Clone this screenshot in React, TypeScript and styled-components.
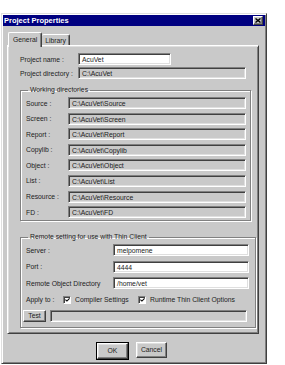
import React from 'react'
import styled, { createGlobalStyle } from 'styled-components'

const FACE = '#c9c9c9'
const TEXT = '#222'
const FONT = `'Liberation Sans', Arial, sans-serif`

const GlobalStyle = createGlobalStyle`
  html, body { margin: 0; padding: 0; background: #fff; }
  body { font-family: ${FONT}; color: ${TEXT}; }
  * { box-sizing: border-box; }
`

const workingDirs = [
  ['Source :', 'C:\\AcuVet\\Source'],
  ['Screen :', 'C:\\AcuVet\\Screen'],
  ['Report :', 'C:\\AcuVet\\Report'],
  ['Copylib :', 'C:\\AcuVet\\Copylib'],
  ['Object :', 'C:\\AcuVet\\Object'],
  ['List :', 'C:\\AcuVet\\List'],
  ['Resource :', 'C:\\AcuVet\\Resource'],
  ['FD :', 'C:\\AcuVet\\FD']
]

const CheckMark = () => (
  <svg width='6' height='6' viewBox='0 0 6 6'>
    <path d='M0.5 2.5 L2.3 4.3 L5.5 1' stroke='#000' strokeWidth='1.3' fill='none' />
  </svg>
)

const App = () => {
  return (
    <>
      <GlobalStyle />
      <Window>
        <TitleBar>
          <Title>Project Properties</Title>
          <CloseButton>
            <svg width='6' height='5' viewBox='0 0 6 5'>
              <path d='M0.5 0.5 L5.5 4.5 M5.5 0.5 L0.5 4.5' stroke='#000' strokeWidth='1.4' />
            </svg>
          </CloseButton>
        </TitleBar>

        <Body>
          <TabRow>
            <Tab active>General</Tab>
            <Tab>Library</Tab>
          </TabRow>
          <Panel>
            <TopGrid>
              <Label>Project name :</Label>
              <Input white width={93}>AcuVet</Input>
              <Label>Project directory :</Label>
              <Input width={168}>C:\AcuVet</Input>
            </TopGrid>

            <Group width={231} marginTop={7}>
              <Legend>Working directories</Legend>
              <DirGrid>
                {workingDirs.map(([label, path]) => (
                  <React.Fragment key={label}>
                    <Label>{label}</Label>
                    <Input width={178}>{path}</Input>
                  </React.Fragment>
                ))}
              </DirGrid>
            </Group>

            <Group width={236} marginTop={12}>
              <Legend>Remote setting for use with Thin Client</Legend>
              <RemoteStack>
                <RemoteGrid>
                  <Label>Server :</Label>
                  <Input white width={136}>melpomene</Input>
                  <Label>Port :</Label>
                  <Input white width={136}>4444</Input>
                  <Label>Remote Object Directory</Label>
                  <Input white width={136}>/home/vet</Input>
                </RemoteGrid>
                <ApplyRow>
                  <ApplyLabel>Apply to :</ApplyLabel>
                  <CheckOption width={75}>
                    <CheckBox>
                      <CheckMark />
                    </CheckBox>
                    Compiler Settings
                  </CheckOption>
                  <CheckOption>
                    <CheckBox>
                      <CheckMark />
                    </CheckBox>
                    Runtime Thin Client Options
                  </CheckOption>
                </ApplyRow>
                <TestRow>
                  <SmallButton>Test</SmallButton>
                  <Input width={197} />
                </TestRow>
              </RemoteStack>
            </Group>
          </Panel>

          <ButtonRow>
            <DefaultFrame>
              <PushButton>OK</PushButton>
            </DefaultFrame>
            <PushButton>Cancel</PushButton>
          </ButtonRow>
        </Body>
      </Window>
    </>
  )
}

export default App

const Window = styled.div`
  width: 266px;
  height: 351px;
  margin: 13px 0 0 1px;
  background: ${FACE};
  border: 1px solid;
  border-color: #dfdfdf #404040 #404040 #dfdfdf;
  box-shadow: inset 1px 1px #fff, inset -1px -1px #808080;
  padding: 1px;
  display: flex;
  flex-direction: column;
`

const TitleBar = styled.div`
  height: 11px;
  background: #000080;
  display: flex;
  align-items: center;
  justify-content: space-between;
  padding: 0 2px 0 1px;
`

const Title = styled.div`
  color: #fff;
  font-weight: bold;
  font-size: 7.5px;
  line-height: 9px;
`

const CloseButton = styled.div`
  width: 10px;
  height: 9px;
  background: ${FACE};
  border: 1px solid;
  border-color: #fff #404040 #404040 #fff;
  box-shadow: inset -1px -1px #808080;
  display: flex;
  align-items: center;
  justify-content: center;
`

const Body = styled.div`
  flex: 1;
  display: flex;
  flex-direction: column;
  padding: 6px 0 0 4px;
`

const TabRow = styled.div`
  display: flex;
  align-items: flex-end;
  padding-left: 1px;
  margin-bottom: -2px;
  position: relative;
  z-index: 1;
`

const Tab = styled.div<{ active?: boolean }>`
  height: ${(p) => (p.active ? 15 : 11)}px;
  margin-bottom: ${(p) => (p.active ? 0 : 2)}px;
  padding: ${(p) => (p.active ? '2px 4px 0 4px' : '1px 3px 0 3px')};
  background: ${FACE};
  border-top: 1px solid #fff;
  border-left: ${(p) => (p.active ? '1px solid #fff' : 'none')};
  border-right: 1px solid #404040;
  box-shadow: inset -1px 0 #808080;
  border-radius: 2px 2px 0 0;
  font-size: 6.8px;
  line-height: 9px;
`

const Panel = styled.div`
  width: 252px;
  height: 289px;
  border: 1px solid;
  border-color: #fff #404040 #404040 #fff;
  box-shadow: inset 1px 1px #dfdfdf, inset -1px -1px #808080;
  padding: 7px 0 0 12px;
  display: flex;
  flex-direction: column;
  align-items: flex-start;
`

const Label = styled.div`
  font-size: 6.8px;
  line-height: 9px;
  white-space: nowrap;
`

const Input = styled.div<{ white?: boolean; width: number }>`
  width: ${(p) => p.width}px;
  height: 12px;
  background: ${(p) => (p.white ? '#fff' : FACE)};
  border: 1px solid;
  border-color: #808080 #fff #fff #808080;
  box-shadow: inset 1px 1px #404040, inset -1px -1px #dfdfdf;
  padding: 1px 0 0 3px;
  font-size: 6.8px;
  line-height: 9px;
  white-space: nowrap;
  overflow: hidden;
`

const TopGrid = styled.div`
  display: grid;
  grid-template-columns: 58px auto;
  row-gap: 2px;
  align-items: center;
`

const Group = styled.fieldset<{ width: number; marginTop: number }>`
  width: ${(p) => p.width}px;
  margin: ${(p) => p.marginTop}px 0 0 0;
  padding: 3px 4px 2px 5px;
  min-width: 0;
  border: 1px solid #808080;
  box-shadow: 1px 1px 0 #fff, inset 1px 1px 0 #fff;
`

const Legend = styled.legend`
  margin-left: 2px;
  padding: 0 2px;
  font-size: 6.8px;
  line-height: 8px;
`

const DirGrid = styled.div`
  display: grid;
  grid-template-columns: 42px auto;
  grid-auto-rows: 12px;
  row-gap: 3.6px;
  align-items: center;
`

const RemoteStack = styled.div`
  display: flex;
  flex-direction: column;
  gap: 4.5px;
  margin-left: -3px;
  padding-bottom: 3px;
`

const RemoteGrid = styled.div`
  display: grid;
  grid-template-columns: 87px auto;
  grid-auto-rows: 12px;
  row-gap: 4.5px;
  align-items: center;
  padding-left: 3px;
`

const ApplyRow = styled.div`
  height: 12px;
  display: flex;
  align-items: center;
  padding-left: 3px;
  font-size: 6.8px;
`

const ApplyLabel = styled.div`
  width: 37px;
  white-space: nowrap;
`

const CheckOption = styled.div<{ width?: number }>`
  ${(p) => (p.width ? `width: ${p.width}px;` : '')}
  display: flex;
  align-items: center;
  gap: 4px;
  white-space: nowrap;
`

const CheckBox = styled.div`
  width: 8px;
  height: 8px;
  background: #fff;
  border: 1px solid;
  border-color: #808080 #fff #fff #808080;
  box-shadow: inset 1px 1px #404040;
  display: flex;
  align-items: center;
  justify-content: center;
  padding: 1px 0 0 1px;
`

const TestRow = styled.div`
  display: flex;
  align-items: center;
  gap: 4px;
`

const SmallButton = styled.div`
  width: 23px;
  height: 12px;
  background: ${FACE};
  border: 1px solid;
  border-color: #fff #404040 #404040 #fff;
  box-shadow: inset -1px -1px #808080;
  font-size: 6.8px;
  line-height: 10px;
  text-align: center;
`

const ButtonRow = styled.div`
  display: flex;
  justify-content: center;
  gap: 7px;
  margin-top: 8px;
  padding-right: 9px;
`

const DefaultFrame = styled.div`
  border: 1px solid #000;
  display: flex;
`

const PushButton = styled.div`
  width: 31px;
  height: 16px;
  background: ${FACE};
  border: 1px solid;
  border-color: #fff #404040 #404040 #fff;
  box-shadow: inset -1px -1px #808080, inset 1px 1px #dfdfdf;
  font-size: 6.8px;
  line-height: 14px;
  text-align: center;
`
